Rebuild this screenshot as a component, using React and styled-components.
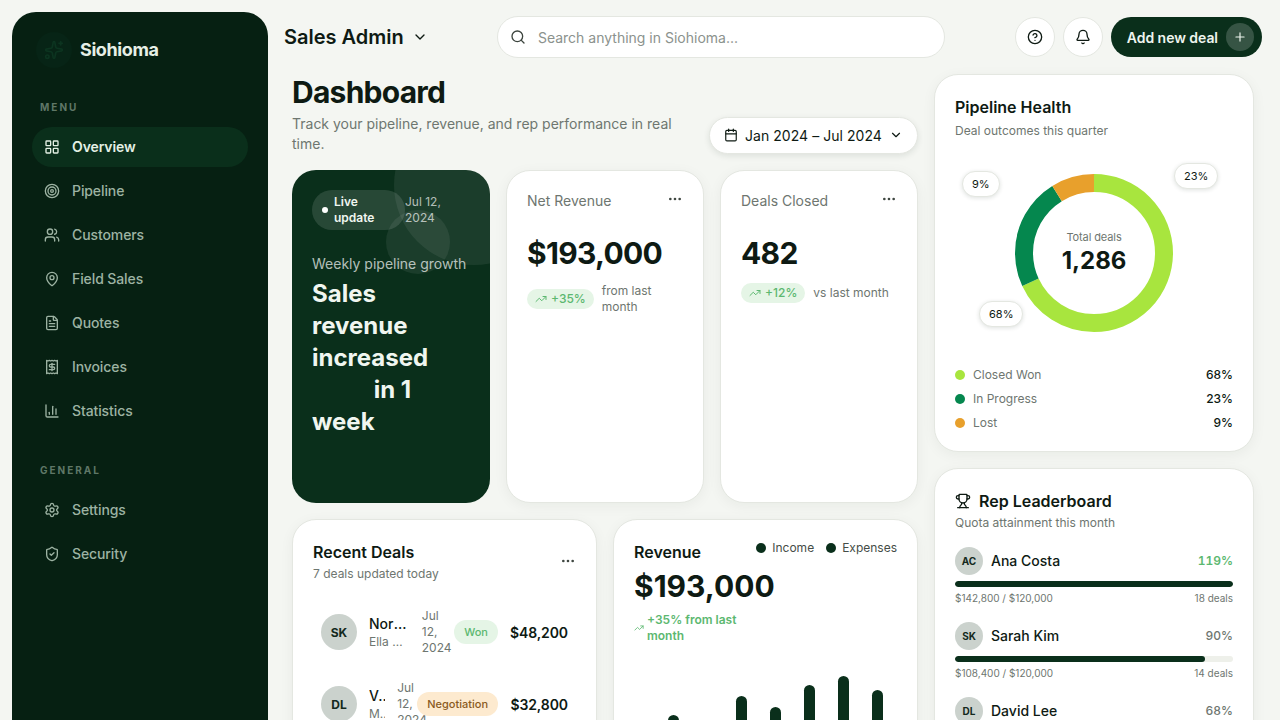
import React from "react";
import styled, { createGlobalStyle } from "styled-components";
import {
  Bell,
  Calendar,
  ChartColumn,
  ChevronDown,
  CircleHelp,
  Ellipsis,
  FileText,
  LayoutGrid,
  MapPin,
  Plus,
  Receipt,
  Search,
  Settings,
  ShieldCheck,
  Sparkles,
  Target,
  TrendingUp,
  Trophy,
  Users,
} from "lucide-react";

const ink = "#0e1a13";
const forest = "#0a2f1b";
const grey = "#6e7670";
const green = "#5cb870";
const line = "#e4e7e1";

const GlobalStyle = createGlobalStyle`
  * {
    box-sizing: border-box;
  }

  body {
    margin: 0;
    background: #f4f6f2;
    color: ${ink};
    font-family: Inter, "Liberation Sans", sans-serif;
  }
`;

const Page = styled.div`
  display: flex;
  height: 100vh;
  overflow: hidden;
  background: #f4f6f2;
`;

const Sidebar = styled.aside`
  flex: 0 0 256px;
  height: 760px;
  margin: 12px 0 0 12px;
  padding: 20px;
  border-radius: 24px;
  background: #062012;
`;

const Brand = styled.div`
  display: flex;
  align-items: center;
  gap: 8px;
  margin-left: 4px;
  color: #e6efe6;
  font-size: 18px;
  line-height: 22px;
  font-weight: 700;
  letter-spacing: -0.4px;
`;

const BrandMark = styled.div`
  display: flex;
  align-items: center;
  justify-content: center;
  width: 36px;
  height: 36px;
  border-radius: 50%;
  background: #072416;
  color: #0c3420;
`;

const NavLabel = styled.div`
  margin: ${(p) => p.$top}px 0 12px 8px;
  color: #5f7767;
  font-size: 10px;
  line-height: 16px;
  font-weight: 700;
  letter-spacing: 2px;
`;

const NavList = styled.nav`
  display: flex;
  flex-direction: column;
  gap: 4px;
`;

const NavItem = styled.a`
  display: flex;
  align-items: center;
  gap: 12px;
  height: 40px;
  padding: 0 12px;
  border-radius: 20px;
  background: ${(p) => (p.$active ? forest : "transparent")};
  color: ${(p) => (p.$active ? "#e4f0e4" : "#9db3a3")};
  font-size: 14px;
  line-height: 20px;
  font-weight: ${(p) => (p.$active ? 600 : 500)};
  letter-spacing: -0.1px;
`;

const Main = styled.main`
  flex: 1;
  min-width: 0;
`;

const Topbar = styled.header`
  display: flex;
  align-items: center;
  justify-content: space-between;
  height: 42px;
  margin: 16px 18px 0 16px;
`;

const Workspace = styled.div`
  display: flex;
  align-items: center;
  gap: 8px;
  width: 143px;
  font-size: 20px;
  font-weight: 600;
  white-space: nowrap;

  svg {
    flex: 0 0 auto;
  }
`;

const SearchBox = styled.label`
  display: flex;
  align-items: center;
  gap: 12px;
  width: 448px;
  height: 42px;
  padding: 0 12px;
  border: 1px solid ${line};
  border-radius: 21px;
  background: #fff;
  color: #3c443e;
`;

const SearchInput = styled.input`
  flex: 1;
  min-width: 0;
  border: 0;
  outline: 0;
  padding: 0;
  background: transparent;
  font: 400 14px Inter, "Liberation Sans", sans-serif;

  &::placeholder {
    color: #8b928d;
    opacity: 1;
  }
`;

const TopActions = styled.div`
  display: flex;
  align-items: center;
  gap: 8px;
`;

const RoundButton = styled.button`
  display: flex;
  align-items: center;
  justify-content: center;
  width: 40px;
  height: 40px;
  padding: 0;
  border: 1px solid ${line};
  border-radius: 50%;
  background: #fff;
  color: ${ink};
`;

const AddButton = styled.button`
  display: flex;
  align-items: center;
  gap: 8px;
  height: 40px;
  padding: 0 8px 0 16px;
  border: 0;
  border-radius: 20px;
  background: ${forest};
  color: #eef5ee;
  font: 600 14px Inter, "Liberation Sans", sans-serif;
  letter-spacing: -0.05px;
  white-space: nowrap;
`;

const AddIcon = styled.span`
  display: flex;
  align-items: center;
  justify-content: center;
  width: 28px;
  height: 28px;
  border-radius: 50%;
  background: rgba(255, 255, 255, 0.18);
`;

const Content = styled.div`
  display: grid;
  grid-template-columns: 626px 320px;
  gap: 16px;
  padding: 16px 26px 0 24px;
`;

const Column = styled.div`
  display: flex;
  flex-direction: column;
  gap: 16px;
  min-width: 0;
`;

const PageHead = styled.div`
  display: flex;
  align-items: flex-end;
  justify-content: space-between;
  gap: 16px;
`;

const PageTitle = styled.h1`
  margin: 0 0 4px;
  font-size: 30px;
  line-height: 36px;
  font-weight: 700;
  letter-spacing: -0.75px;
`;

const PageSub = styled.p`
  margin: 0;
  color: ${grey};
  font-size: 14px;
  line-height: 20px;
`;

const DatePill = styled.button`
  flex: 0 0 auto;
  display: flex;
  align-items: center;
  justify-content: space-between;
  width: 209px;
  height: 37px;
  padding: 0 14px 1px;
  border: 1px solid ${line};
  border-radius: 19px;
  background: #fff;
  box-shadow: 0 2px 6px rgba(20, 40, 25, 0.1);
  color: ${ink};
  font: 400 14px Inter, "Liberation Sans", sans-serif;
  letter-spacing: 0.05px;
  white-space: nowrap;
`;

const StatRow = styled.div`
  display: grid;
  grid-template-columns: repeat(3, 198px);
  gap: 16px;
  min-height: 333px;
`;

const Card = styled.section`
  min-width: 0;
  padding: 20px;
  border: 1px solid ${line};
  border-radius: 24px;
  background: #fff;
  box-shadow: 0 3px 14px rgba(20, 40, 25, 0.05);
`;

const Hero = styled.section`
  position: relative;
  overflow: hidden;
  padding: 20px;
  border-radius: 24px;
  background: ${forest};
  color: #f0f6f0;
`;

const HeroCircle = styled.div`
  position: absolute;
  top: ${(p) => p.$top}px;
  right: ${(p) => p.$right}px;
  width: ${(p) => p.$size}px;
  height: ${(p) => p.$size}px;
  border-radius: 50%;
  background: rgba(255, 255, 255, 0.07);
`;

const HeroTop = styled.div`
  position: relative;
  display: flex;
  align-items: center;
  justify-content: space-between;
  font-size: 12px;
  line-height: 16px;
`;

const LivePill = styled.div`
  display: flex;
  align-items: center;
  gap: 6px;
  flex: 0 0 93px;
  height: 40px;
  padding: 4px 16px 4px 10px;
  border-radius: 20px;
  background: rgba(255, 255, 255, 0.12);
  font-weight: 600;
`;

const LiveDot = styled.span`
  flex: 0 0 6px;
  height: 6px;
  border-radius: 50%;
  background: #fff;
`;

const HeroDate = styled.div`
  flex: 1;
  color: rgba(255, 255, 255, 0.68);
`;

const HeroKicker = styled.div`
  position: relative;
  margin-top: 24px;
  color: rgba(255, 255, 255, 0.7);
  font-size: 14px;
  line-height: 20px;
`;

const HeroTitle = styled.h2`
  position: relative;
  margin: 4px 0 0;
  font-size: 24px;
  line-height: 32px;
  font-weight: 700;
`;

const HeroGap = styled.span`
  display: inline-block;
  width: 56px;
`;

const CardHead = styled.div`
  display: flex;
  align-items: flex-start;
  justify-content: space-between;
  color: ${grey};
  font-size: 14px;
  line-height: 20px;
`;

const MoreIcon = styled(Ellipsis)`
  flex: 0 0 auto;
  color: #3f4741;
`;

const BigValue = styled.div`
  margin-top: ${(p) => p.$top}px;
  font-size: 30px;
  line-height: 36px;
  font-weight: 700;
  letter-spacing: ${(p) => (p.$tight ? "-0.7px" : "0")};
  white-space: nowrap;
`;

const DeltaRow = styled.div`
  display: flex;
  align-items: center;
  gap: 8px;
  margin-top: 12px;
  color: ${grey};
  font-size: 12px;
  line-height: 16px;
`;

const DeltaBadge = styled.span`
  flex: 0 0 auto;
  display: flex;
  align-items: center;
  gap: 4px;
  height: 20px;
  padding: 0 8px;
  border-radius: 10px;
  background: #e5f5e6;
  color: ${green};
  font-weight: 500;
`;

const BottomRow = styled.div`
  display: grid;
  grid-template-columns: 305px 305px;
  gap: 16px;
`;

const HeadRow = styled.div`
  display: flex;
  align-items: center;
  justify-content: space-between;
`;

const CardTitle = styled.h3`
  display: flex;
  align-items: center;
  gap: 8px;
  margin: 0;
  font-size: 16px;
  line-height: 24px;
  font-weight: 600;
`;

const CardSub = styled.p`
  margin: ${(p) => p.$top}px 0 0;
  color: ${grey};
  font-size: 12px;
  line-height: 16px;
`;

const DealList = styled.div`
  margin-top: 14px;
`;

const DealRow = styled.div`
  display: flex;
  align-items: center;
  gap: 12px;
  padding: 12px 8px;
`;

const Avatar = styled.div`
  flex: 0 0 ${(p) => p.$size}px;
  display: flex;
  align-items: center;
  justify-content: center;
  height: ${(p) => p.$size}px;
  border-radius: 50%;
  background: #cbd2cd;
  color: #14291c;
  font-size: ${(p) => (p.$size > 30 ? 12 : 10)}px;
  font-weight: 700;
`;

const DealText = styled.div`
  flex: 2 1 0;
  min-width: 0;
`;

const DealName = styled.div`
  overflow: hidden;
  font-size: 14px;
  line-height: 20px;
  font-weight: 500;
  white-space: nowrap;
  text-overflow: ellipsis;
`;

const DealOwner = styled.div`
  overflow: hidden;
  color: ${grey};
  font-size: 12px;
  line-height: 16px;
  white-space: nowrap;
  text-overflow: ellipsis;
`;

const DealDate = styled.div`
  flex: 1 1 0;
  min-width: 0;
  color: ${grey};
  font-size: 12px;
  line-height: 16px;
`;

const StatusPill = styled.span`
  flex: 0 0 auto;
  position: relative;
  padding: 0 10px;
  border-radius: 12px;
  background: ${(p) => (p.$tone === "won" ? "#e5f5e6" : "#fdeacf")};
  color: ${(p) => (p.$tone === "won" ? green : "#8a5a1e")};
  font-size: 11px;
  line-height: 24px;
  font-weight: 500;
`;

const DealAmount = styled.div`
  flex: 0 0 58px;
  font-size: 14px;
  font-weight: 600;
  letter-spacing: -0.1px;
  text-align: right;
  white-space: nowrap;
`;

const RevenueHead = styled.div`
  display: flex;
  align-items: flex-start;
  justify-content: space-between;
  gap: 16px;
`;

const RevenueInfo = styled.div`
  flex: 1;
  min-width: 0;
`;

const Legend = styled.div`
  flex: 0 0 auto;
  display: flex;
  gap: 12px;
  color: #454d47;
  font-size: 12px;
  line-height: 16px;
`;

const LegendItem = styled.span`
  display: flex;
  align-items: center;
  gap: 6px;
`;

const Dot = styled.span`
  flex: 0 0 10px;
  height: 10px;
  border-radius: 50%;
  background: ${(p) => p.$color};
`;

const TrendLine = styled.div`
  display: flex;
  align-items: center;
  gap: 3px;
  margin-top: 8px;
  color: ${green};
  font-size: 12px;
  line-height: 16px;
  font-weight: 600;

  svg {
    flex: 0 0 auto;
  }
`;

const Bars = styled.div`
  display: flex;
  align-items: flex-end;
  justify-content: space-between;
  height: 140px;
  margin-top: 16px;
  padding-right: 14px;
`;

const Bar = styled.div`
  width: 11px;
  border-radius: 6px 6px 0 0;
  background: ${forest};
`;

const DonutWrap = styled.div`
  position: relative;
  display: flex;
  justify-content: center;
  height: 158px;
  margin-top: 35px;
`;

const DonutCenter = styled.div`
  position: absolute;
  top: 55px;
  left: 0;
  right: 0;
  text-align: center;
`;

const DonutLabel = styled.div`
  color: ${grey};
  font-size: 11px;
  line-height: 16px;
  letter-spacing: -0.1px;
`;

const DonutValue = styled.div`
  font-size: 24px;
  line-height: 32px;
  font-weight: 700;
`;

const ShareTag = styled.span`
  position: absolute;
  top: ${(p) => p.$top}px;
  left: ${(p) => p.$left}px;
  padding: 0 9px;
  border: 1px solid ${line};
  border-radius: 13px;
  background: #fff;
  box-shadow: 0 1px 4px rgba(20, 40, 25, 0.14);
  font-size: 11px;
  line-height: 24px;
`;

const Outcomes = styled.div`
  display: flex;
  flex-direction: column;
  gap: 8px;
  margin-top: 35px;
`;

const OutcomeRow = styled.div`
  display: flex;
  align-items: center;
  gap: 8px;
  color: ${grey};
  font-size: 12px;
  line-height: 16px;
`;

const OutcomeValue = styled.span`
  margin-left: auto;
  color: ${ink};
  font-weight: 500;
`;

const RepList = styled.div`
  display: flex;
  flex-direction: column;
  gap: 16px;
  margin-top: 16px;
`;

const RepTop = styled.div`
  display: flex;
  align-items: center;
  gap: 8px;
  font-size: 14px;
  line-height: 20px;
  font-weight: 500;
`;

const RepPercent = styled.span`
  margin-left: auto;
  color: ${(p) => (p.$over ? green : grey)};
  font-size: 12px;
  font-weight: ${(p) => (p.$over ? 600 : 500)};
  font-variant-numeric: tabular-nums;
`;

const Track = styled.div`
  height: 6px;
  margin-top: 6px;
  border-radius: 3px;
  background: #eef0ea;
  overflow: hidden;
`;

const Fill = styled.div`
  height: 100%;
  border-radius: 3px;
  background: ${forest};
`;

const RepMeta = styled.div`
  display: flex;
  justify-content: space-between;
  margin-top: 3px;
  color: ${grey};
  font-size: 10px;
  line-height: 16px;
`;

const mainNav = [
  ["Overview", LayoutGrid],
  ["Pipeline", Target],
  ["Customers", Users],
  ["Field Sales", MapPin],
  ["Quotes", FileText],
  ["Invoices", Receipt],
  ["Statistics", ChartColumn],
];

const generalNav = [
  ["Settings", Settings],
  ["Security", ShieldCheck],
];

const deals = [
  { id: "SK", name: "Northwind Traders", owner: "Ella Martin", status: "Won", tone: "won", amount: "$48,200" },
  { id: "DL", name: "Vertex Labs", owner: "Marcus Lee", status: "Negotiation", tone: "open", amount: "$32,800" },
];

const barHeights = [60, 85, 70, 104, 93, 115, 124, 110];

const outcomes = [
  { label: "Closed Won", value: 68, color: "#a8e53e" },
  { label: "In Progress", value: 23, color: "#05874e" },
  { label: "Lost", value: 9, color: "#e8a02c" },
];

const reps = [
  { id: "AC", name: "Ana Costa", percent: 119, sales: "$142,800 / $120,000", count: "18 deals" },
  { id: "SK", name: "Sarah Kim", percent: 90, sales: "$108,400 / $120,000", count: "14 deals" },
  { id: "DL", name: "David Lee", percent: 68, sales: "$81,600 / $120,000", count: "11 deals" },
];

const Donut = () => {
  const radius = 70;
  const length = 2 * Math.PI * radius;
  let used = 0;
  return (
    <svg width="158" height="158" viewBox="0 0 158 158">
      <g transform="rotate(-90 79 79)" fill="none" strokeWidth="18">
        {outcomes.map((o) => {
          const dash = (o.value / 100) * length;
          const arc = (
            <circle
              key={o.label}
              cx="79"
              cy="79"
              r={radius}
              stroke={o.color}
              strokeDasharray={`${dash} ${length - dash}`}
              strokeDashoffset={-used}
            />
          );
          used += dash;
          return arc;
        })}
      </g>
    </svg>
  );
};

const App = () => (
  <Page>
    <GlobalStyle />
    <Sidebar>
      <Brand>
        <BrandMark>
          <Sparkles size={20} />
        </BrandMark>
        Siohioma
      </Brand>
      <NavLabel $top={31}>MENU</NavLabel>
      <NavList>
        {mainNav.map(([label, Icon], i) => (
          <NavItem key={label} $active={i === 0}>
            <Icon size={16} />
            {label}
          </NavItem>
        ))}
      </NavList>
      <NavLabel $top={31}>GENERAL</NavLabel>
      <NavList>
        {generalNav.map(([label, Icon]) => (
          <NavItem key={label}>
            <Icon size={16} />
            {label}
          </NavItem>
        ))}
      </NavList>
    </Sidebar>

    <Main>
      <Topbar>
        <Workspace>
          Sales Admin
          <ChevronDown size={16} />
        </Workspace>
        <SearchBox>
          <Search size={16} />
          <SearchInput placeholder="Search anything in Siohioma..." />
        </SearchBox>
        <TopActions>
          <RoundButton>
            <CircleHelp size={16} />
          </RoundButton>
          <RoundButton>
            <Bell size={16} />
          </RoundButton>
          <AddButton>
            Add new deal
            <AddIcon>
              <Plus size={14} />
            </AddIcon>
          </AddButton>
        </TopActions>
      </Topbar>

      <Content>
        <Column>
          <PageHead>
            <div>
              <PageTitle>Dashboard</PageTitle>
              <PageSub>Track your pipeline, revenue, and rep performance in real time.</PageSub>
            </div>
            <DatePill>
              <Calendar size={14} />
              Jan 2024 – Jul 2024
              <ChevronDown size={14} />
            </DatePill>
          </PageHead>

          <StatRow>
            <Hero>
              <HeroCircle $top={-65} $right={-64} $size={160} />
              <HeroCircle $top={40} $right={40} $size={64} />
              <HeroTop>
                <LivePill>
                  <LiveDot />
                  Live update
                </LivePill>
                <HeroDate>Jul 12, 2024</HeroDate>
              </HeroTop>
              <HeroKicker>Weekly pipeline growth</HeroKicker>
              <HeroTitle>
                Sales revenue increased <HeroGap /> in 1 week
              </HeroTitle>
            </Hero>

            <Card>
              <CardHead>
                Net Revenue
                <MoreIcon size={16} />
              </CardHead>
              <BigValue $top={24} $tight>$193,000</BigValue>
              <DeltaRow>
                <DeltaBadge>
                  <TrendingUp size={12} />
                  +35%
                </DeltaBadge>
                from last month
              </DeltaRow>
            </Card>

            <Card>
              <CardHead>
                Deals Closed
                <MoreIcon size={16} />
              </CardHead>
              <BigValue $top={24} $tight>482</BigValue>
              <DeltaRow>
                <DeltaBadge>
                  <TrendingUp size={12} />
                  +12%
                </DeltaBadge>
                vs last month
              </DeltaRow>
            </Card>
          </StatRow>

          <BottomRow>
            <Card>
              <HeadRow>
                <div>
                  <CardTitle>Recent Deals</CardTitle>
                  <CardSub $top={2}>7 deals updated today</CardSub>
                </div>
                <MoreIcon size={16} />
              </HeadRow>
              <DealList>
                {deals.map((d) => (
                  <DealRow key={d.id}>
                    <Avatar $size={36}>{d.id}</Avatar>
                    <DealText>
                      <DealName>{d.name}</DealName>
                      <DealOwner>{d.owner}</DealOwner>
                    </DealText>
                    <DealDate>Jul 12, 2024</DealDate>
                    <StatusPill $tone={d.tone}>{d.status}</StatusPill>
                    <DealAmount>{d.amount}</DealAmount>
                  </DealRow>
                ))}
              </DealList>
            </Card>

            <Card>
              <RevenueHead>
                <RevenueInfo>
                  <CardTitle>Revenue</CardTitle>
                  <BigValue $top={4}>$193,000</BigValue>
                  <TrendLine>
                    <TrendingUp size={10} />
                    +35% from last month
                  </TrendLine>
                </RevenueInfo>
                <Legend>
                  <LegendItem>
                    <Dot $color={forest} />
                    Income
                  </LegendItem>
                  <LegendItem>
                    <Dot $color={forest} />
                    Expenses
                  </LegendItem>
                </Legend>
              </RevenueHead>
              <Bars>
                {barHeights.map((h, i) => (
                  <Bar key={i} style={{ height: h }} />
                ))}
              </Bars>
            </Card>
          </BottomRow>
        </Column>

        <Column>
          <Card>
            <CardTitle>Pipeline Health</CardTitle>
            <CardSub $top={4}>Deal outcomes this quarter</CardSub>
            <DonutWrap>
              <Donut />
              <DonutCenter>
                <DonutLabel>Total deals</DonutLabel>
                <DonutValue>1,286</DonutValue>
              </DonutCenter>
              <ShareTag $top={-3} $left={7}>9%</ShareTag>
              <ShareTag $top={-11} $left={219}>23%</ShareTag>
              <ShareTag $top={127} $left={24}>68%</ShareTag>
            </DonutWrap>
            <Outcomes>
              {outcomes.map((o) => (
                <OutcomeRow key={o.label}>
                  <Dot $color={o.color} />
                  {o.label}
                  <OutcomeValue>{o.value}%</OutcomeValue>
                </OutcomeRow>
              ))}
            </Outcomes>
          </Card>

          <Card>
            <CardTitle>
              <Trophy size={16} />
              Rep Leaderboard
            </CardTitle>
            <CardSub $top={2}>Quota attainment this month</CardSub>
            <RepList>
              {reps.map((r) => (
                <div key={r.id}>
                  <RepTop>
                    <Avatar $size={28}>{r.id}</Avatar>
                    {r.name}
                    <RepPercent $over={r.percent > 100}>{r.percent}%</RepPercent>
                  </RepTop>
                  <Track>
                    <Fill style={{ width: `${Math.min(r.percent, 100)}%` }} />
                  </Track>
                  <RepMeta>
                    <span>{r.sales}</span>
                    <span>{r.count}</span>
                  </RepMeta>
                </div>
              ))}
            </RepList>
          </Card>
        </Column>
      </Content>
    </Main>
  </Page>
);

export default App;
